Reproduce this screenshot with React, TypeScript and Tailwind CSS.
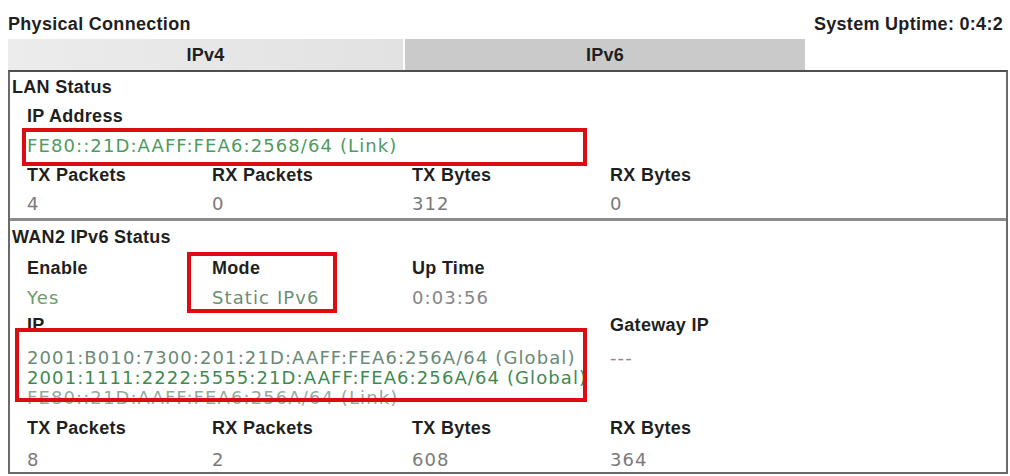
const head = "font-['Liberation_Sans',Arial,sans-serif] font-bold text-[18px] tracking-[0.3px] text-[#1f1f1f] leading-[20px]";
const val = "font-['DejaVu_Sans',Verdana,sans-serif] text-[18px] tracking-[1.1px] leading-[20px]";
const cols = 'grid grid-cols-[185px_200px_198px_1fr] items-center';

function Cell({ children, className = '' }: { children: React.ReactNode; className?: string }) {
  return <div className={className}>{children}</div>;
}

function Counters({ tx, rx, txb, rxb, headH, valH }: { tx: string; rx: string; txb: string; rxb: string; headH: string; valH: string }) {
  return (
    <>
      <div className={`${cols} ${headH}`}>
        <Cell className={head}>TX Packets</Cell>
        <Cell className={head}>RX Packets</Cell>
        <Cell className={head}>TX Bytes</Cell>
        <Cell className={head}>RX Bytes</Cell>
      </div>
      <div className={`${cols} ${valH}`}>
        <Cell className={`${val} text-[#7a7a7a]`}>{tx}</Cell>
        <Cell className={`${val} text-[#7a7a7a]`}>{rx}</Cell>
        <Cell className={`${val} text-[#7a7a7a]`}>{txb}</Cell>
        <Cell className={`${val} text-[#7a7a7a]`}>{rxb}</Cell>
      </div>
    </>
  );
}

export default function App() {
  return (
    <div className="w-[1010px] h-[476px] bg-white pl-[8px] overflow-hidden">
      <div className="flex justify-between h-[39px] pt-[14px] pr-[7px]">
        <span className={head}>Physical Connection</span>
        <span className={head}>System Uptime: 0:4:2</span>
      </div>

      <div className="flex gap-[2px] h-[31px]">
        <div className={`w-[395px] flex items-center justify-center bg-gradient-to-r from-[#ececec] to-[#e2e2e2] ${head}`}>IPv4</div>
        <div className={`w-[400px] flex items-center justify-center bg-[#cacaca] ${head}`}>IPv6</div>
      </div>

      <div className="relative w-[1000px] border-t-2 border-t-[#4f4f4f] border-x-2 border-b-2 border-x-[#6a6a6a] border-b-[#6a6a6a] bg-white">
        {/* LAN */}
        <div className="pl-[2px]">
          <div className={`h-[29px] flex items-center ${head}`}>LAN Status</div>
          <div className="pl-[15px]">
            <div className={`h-[30px] flex items-center ${head}`}>IP Address</div>
            <div className={`h-[29px] flex items-center ${val} text-[#4f9a5f]`}>FE80::21D:AAFF:FEA6:2568/64 (Link)</div>
            <Counters tx="4" rx="0" txb="312" rxb="0" headH="h-[29px]" valH="h-[29px]" />
          </div>
        </div>

        <div className="h-[3px] bg-[#8c8c8c]" />

        {/* WAN2 */}
        <div className="pl-[2px]">
          <div className={`h-[32px] flex items-center ${head}`}>WAN2 IPv6 Status</div>
          <div className="pl-[15px]">
            <div className={`${cols} h-[30px]`}>
              <Cell className={head}>Enable</Cell>
              <Cell className={head}>Mode</Cell>
              <Cell className={head}>Up Time</Cell>
              <Cell />
            </div>
            <div className={`${cols} h-[29px]`}>
              <Cell className={`${val} text-[#6a9a6a]`}>Yes</Cell>
              <Cell className={`${val} text-[#6a8f72]`}>Static IPv6</Cell>
              <Cell className={`${val} text-[#858585]`}>0:03:56</Cell>
              <Cell />
            </div>
            <div className="grid grid-cols-[583px_1fr]">
              <div>
                <div className={`h-[25px] flex items-center ${head}`}>IP</div>
                <div className="pt-[11px]">
                  <div className={`${val} text-[#6a8a76]`}>2001:B010:7300:201:21D:AAFF:FEA6:256A/64 (Global)</div>
                  <div className={`${val} text-[#3f8a52]`}>2001:1111:2222:5555:21D:AAFF:FEA6:256A/64 (Global)</div>
                  <div className={`${val} text-[#98a898]`}>FE80::21D:AAFF:FEA6:256A/64 (Link)</div>
                </div>
              </div>
              <div>
                <div className={`h-[25px] flex items-center ${head}`}>Gateway IP</div>
                <div className={`pt-[11px] ${val} text-[#8a8a8a]`}>---</div>
              </div>
            </div>
            <Counters tx="8" rx="2" txb="608" rxb="364" headH="h-[40px]" valH="h-[24px]" />
          </div>
        </div>

        {/* highlight annotations */}
        <div className="absolute left-[12px] top-[56px] w-[565px] h-[38px] border-[4px] border-[#dd0c12]" />
        <div className="absolute left-[177px] top-[180px] w-[150px] h-[61px] border-[4px] border-[#dd0c12]" />
        <div className="absolute left-[5px] top-[256px] w-[572px] h-[74px] border-[4px] border-[#dd0c12]" />
      </div>
    </div>
  );
}
